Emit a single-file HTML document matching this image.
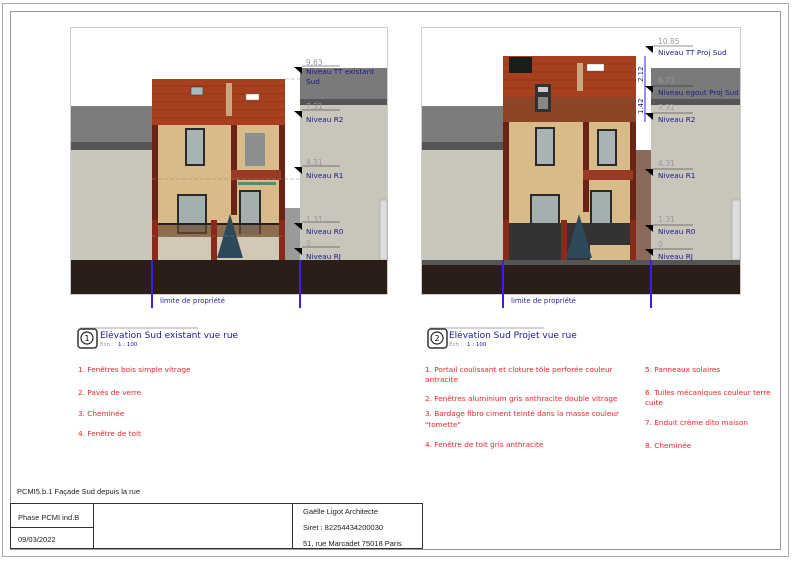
<!DOCTYPE html>
<html><head><meta charset="utf-8"><style>
html,body{margin:0;padding:0;background:#fff;width:792px;height:561px;overflow:hidden}
svg{display:block}
text{font-family:"DejaVu Sans","Liberation Sans",sans-serif}
.lv{fill:#1a1a8c;font-size:7.3px}
.nm{fill:#999;font-size:7.5px}
.rd{fill:#e8262a;font-size:7.3px}
.tb{font-family:"Liberation Sans",sans-serif;font-size:7.5px;fill:#222}
</style></head><body>
<svg width="792" height="561" viewBox="0 0 792 561" xmlns="http://www.w3.org/2000/svg">
<rect x="2.5" y="3.5" width="786" height="553" fill="none" stroke="#aaa" stroke-width="1"/>
<rect x="10.5" y="11.5" width="770" height="538" fill="none" stroke="#999" stroke-width="1"/>

<!-- LEFT DRAWING -->
<rect x="70.5" y="27.5" width="317" height="267" fill="#fff" stroke="#ccc"/>
<rect x="71" y="106" width="81" height="40" fill="#7c7c7c"/>
<rect x="71" y="142" width="81" height="8" fill="#555"/>
<rect x="71" y="150" width="81" height="110" fill="#c9c6bc"/>
<rect x="300" y="68" width="87" height="31" fill="#7a7a7a"/>
<rect x="300" y="99" width="87" height="6" fill="#555"/>
<rect x="300" y="105" width="87" height="155" fill="#c8c5bb"/>
<rect x="380" y="200" width="7" height="60" fill="#ddd" stroke="#999" stroke-width=".5"/>
<rect x="285" y="208" width="15" height="52" fill="#9a9a9a"/>
<rect x="152" y="79" width="133" height="46" fill="#a8401f"/>
<g stroke="#7a2a14" stroke-width=".6"><line x1="152" y1="86" x2="285" y2="86"/><line x1="152" y1="94" x2="285" y2="94"/><line x1="152" y1="102" x2="285" y2="102"/><line x1="152" y1="110" x2="285" y2="110"/><line x1="152" y1="118" x2="285" y2="118"/></g>
<rect x="191" y="87" width="12" height="8" fill="#a9b8b8" stroke="#333" stroke-width=".5"/>
<rect x="226" y="83" width="6" height="33" fill="#c9a77c"/>
<rect x="246" y="94" width="13" height="6" fill="#fff" stroke="#577" stroke-width=".4"/>
<rect x="152" y="125" width="133" height="135" fill="#d9bb8a"/>
<rect x="152" y="125" width="6" height="135" fill="#6b2315"/>
<rect x="279" y="125" width="6" height="135" fill="#6b2315"/>
<rect x="231" y="125" width="6" height="90" fill="#6b2315"/>
<rect x="185" y="128" width="20" height="38" fill="#2a2a2a"/><rect x="187" y="130" width="16" height="34" fill="#a8b4b4"/>
<rect x="245" y="133" width="20" height="33" fill="#8a8f90"/>
<rect x="231" y="170" width="50" height="10" fill="#9b3a24"/>
<rect x="238" y="182" width="38" height="3" fill="#4a8f7a"/>
<rect x="177" y="194" width="30" height="40" fill="#2a2a2a"/><rect x="179" y="196" width="26" height="36" fill="#a4b0b0"/>
<rect x="239" y="190" width="22" height="44" fill="#2a2a2a"/><rect x="241" y="192" width="18" height="42" fill="#a4b0b0"/>
<rect x="152" y="223" width="133" height="2" fill="#222"/>
<rect x="152" y="225" width="133" height="12" fill="#6b4a30" opacity=".7"/>
<rect x="152" y="237" width="133" height="23" fill="#d2c8b6"/>
<rect x="152" y="220" width="6" height="40" fill="#8a2a1a"/><rect x="211" y="220" width="6" height="40" fill="#8a2a1a"/><rect x="279" y="220" width="6" height="40" fill="#8a2a1a"/>
<polygon points="230,214 243,258 217,258" fill="#2e4a5a"/>
<rect x="71" y="260" width="316" height="34" fill="#2b1d17"/>
<rect x="151" y="260" width="2" height="48" fill="#3a1fe6"/>
<rect x="299" y="260" width="2" height="48" fill="#3a1fe6"/>
<text x="160" y="303" style="font-size:7px;fill:#2a2aa0">limite de propriété</text>
<g stroke="#888" stroke-width=".6" stroke-dasharray="4,2"><line x1="285" y1="79" x2="300" y2="79"/><line x1="152" y1="179" x2="300" y2="179"/><line x1="152" y1="236" x2="300" y2="236"/></g>
<g fill="#000"><polygon points="294,67 302,67 302,74"/><polygon points="294,111 302,111 302,118"/><polygon points="294,167 302,167 302,174"/><polygon points="294,223 302,223 302,230"/><polygon points="294,248 302,248 302,255"/></g>
<g stroke="#222" stroke-width=".6"><line x1="302" y1="66" x2="340" y2="66"/><line x1="302" y1="110" x2="340" y2="110"/><line x1="302" y1="166" x2="340" y2="166"/><line x1="302" y1="222" x2="340" y2="222"/><line x1="302" y1="247" x2="340" y2="247"/></g>
<text class="nm" x="306" y="65">9,63</text><text class="lv" x="306" y="74">Niveau TT existant</text><text class="lv" x="306" y="84">Sud</text>
<text class="nm" x="306" y="109">7,31</text><text class="lv" x="306" y="122">Niveau R2</text>
<text class="nm" x="306" y="165">4,31</text><text class="lv" x="306" y="178">Niveau R1</text>
<text class="nm" x="306" y="222">1,31</text><text class="lv" x="306" y="234">Niveau R0</text>
<text class="nm" x="306" y="246">0</text><text class="lv" x="306" y="259">Niveau RJ</text>

<!-- RIGHT DRAWING -->
<rect x="421.5" y="27.5" width="319" height="267" fill="#fff" stroke="#ccc"/>
<rect x="422" y="106" width="81" height="40" fill="#7c7c7c"/>
<rect x="422" y="142" width="81" height="8" fill="#555"/>
<rect x="422" y="150" width="81" height="110" fill="#c9c6bc"/>
<rect x="651" y="68" width="89" height="31" fill="#7a7a7a"/>
<rect x="651" y="99" width="89" height="6" fill="#555"/>
<rect x="651" y="105" width="89" height="155" fill="#c8c5bb"/>
<rect x="732" y="200" width="8" height="60" fill="#ddd" stroke="#999" stroke-width=".5"/>
<rect x="636" y="150" width="15" height="110" fill="#8a6a5a"/>
<rect x="503" y="56" width="133" height="41" fill="#a8401f"/>
<g stroke="#7a2a14" stroke-width=".6"><line x1="503" y1="64" x2="636" y2="64"/><line x1="503" y1="72" x2="636" y2="72"/><line x1="503" y1="80" x2="636" y2="80"/><line x1="503" y1="88" x2="636" y2="88"/></g>
<rect x="509" y="57" width="23" height="16" fill="#1c1c1c"/>
<rect x="577" y="63" width="6" height="28" fill="#c9a77c"/>
<rect x="587" y="64" width="17" height="7" fill="#fff" stroke="#577" stroke-width=".4"/>
<rect x="503" y="97" width="133" height="25" fill="#8c4526"/>
<rect x="535" y="84" width="16" height="28" fill="#333"/><rect x="538" y="87" width="10" height="5" fill="#ccc"/><rect x="538" y="97" width="10" height="12" fill="#888"/>
<rect x="503" y="122" width="133" height="138" fill="#d9bb8a"/>
<rect x="503" y="122" width="6" height="138" fill="#6b2315"/>
<rect x="630" y="122" width="6" height="138" fill="#6b2315"/>
<rect x="583" y="122" width="6" height="90" fill="#6b2315"/>
<rect x="535" y="127" width="20" height="39" fill="#2a2a2a"/><rect x="537" y="129" width="16" height="35" fill="#a8b4b4"/>
<rect x="597" y="129" width="20" height="37" fill="#2a2a2a"/><rect x="599" y="131" width="16" height="33" fill="#a8b4b4"/>
<rect x="583" y="170" width="50" height="10" fill="#9b3a24"/>
<rect x="530" y="194" width="30" height="42" fill="#2a2a2a"/><rect x="532" y="196" width="26" height="38" fill="#a4b0b0"/>
<rect x="590" y="190" width="22" height="46" fill="#2a2a2a"/><rect x="592" y="192" width="18" height="44" fill="#a4b0b0"/>
<rect x="503" y="223" width="133" height="37" fill="#333"/>
<rect x="590" y="245" width="46" height="15" fill="#d9bb8a"/>
<rect x="503" y="220" width="6" height="40" fill="#8a2a1a"/><rect x="561" y="220" width="6" height="40" fill="#8a2a1a"/><rect x="630" y="220" width="6" height="40" fill="#8a2a1a"/>
<polygon points="579,214 592,258 566,258" fill="#2e4a5a"/>
<rect x="422" y="260" width="318" height="5" fill="#555"/>
<rect x="422" y="265" width="318" height="29" fill="#2b1d17"/>
<rect x="502" y="260" width="2" height="48" fill="#3a1fe6"/>
<rect x="650" y="260" width="2" height="48" fill="#3a1fe6"/>
<text x="511" y="303" style="font-size:7px;fill:#2a2aa0">limite de propriété</text>
<g stroke="#3a1fe6" stroke-width="1"><line x1="645" y1="56" x2="645" y2="122"/></g>
<text x="0" y="0" transform="translate(643,82) rotate(-90)" style="font-size:7px;fill:#1a1a8c">2.12</text>
<text x="0" y="0" transform="translate(643,114) rotate(-90)" style="font-size:7px;fill:#1a1a8c">1.42</text>
<g fill="#000"><polygon points="645,46 653,46 653,53"/><polygon points="645,86 653,86 653,93"/><polygon points="645,113 653,113 653,120"/><polygon points="645,169 653,169 653,176"/><polygon points="645,225 653,225 653,232"/><polygon points="645,249 653,249 653,256"/></g>
<g stroke="#222" stroke-width=".6"><line x1="653" y1="46" x2="693" y2="46"/><line x1="653" y1="86" x2="693" y2="86"/><line x1="653" y1="113" x2="693" y2="113"/><line x1="653" y1="169" x2="693" y2="169"/><line x1="653" y1="225" x2="693" y2="225"/><line x1="653" y1="249" x2="693" y2="249"/></g>
<text class="nm" x="658" y="44">10.85</text><text class="lv" x="658" y="55">Niveau TT Proj Sud</text>
<text class="nm" x="658" y="83">8.73</text><text class="lv" x="658" y="95">Niveau egout Proj Sud</text>
<text class="nm" x="658" y="110">7.31</text><text class="lv" x="658" y="122">Niveau R2</text>
<text class="nm" x="658" y="166">4.31</text><text class="lv" x="658" y="178">Niveau R1</text>
<text class="nm" x="658" y="222">1.31</text><text class="lv" x="658" y="234">Niveau R0</text>
<text class="nm" x="658" y="247">0</text><text class="lv" x="658" y="259">Niveau RJ</text>

<!-- CAPTIONS -->
<line x1="80" y1="328" x2="198" y2="328" stroke="#888" stroke-width=".8"/>
<rect x="78" y="329" width="19" height="19" rx="3" fill="#fff" stroke="#333" stroke-width="1.5"/>
<circle cx="87" cy="338" r="6" fill="#fff" stroke="#222" stroke-width="1.2"/>
<text x="87" y="341" text-anchor="middle" style="font-size:8px;fill:#000">1</text>
<text x="100" y="338" style="font-size:9px;fill:#1a1a8c">Elévation Sud existant vue rue</text>
<text x="100" y="346" style="font-size:5.5px;fill:#999">Ech :</text><text x="118" y="346" style="font-size:5.5px;fill:#1a1a8c">1 : 100</text>

<line x1="430" y1="328" x2="544" y2="328" stroke="#888" stroke-width=".8"/>
<rect x="428" y="329" width="19" height="19" rx="3" fill="#fff" stroke="#333" stroke-width="1.5"/>
<circle cx="437" cy="338" r="6" fill="#fff" stroke="#222" stroke-width="1.2"/>
<text x="437" y="341" text-anchor="middle" style="font-size:8px;fill:#000">2</text>
<text x="449" y="338" style="font-size:9px;fill:#1a1a8c">Elévation Sud Projet vue rue</text>
<text x="449" y="346" style="font-size:5.5px;fill:#999">Ech :</text><text x="467" y="346" style="font-size:5.5px;fill:#1a1a8c">1 : 100</text>

<text class="rd" x="78" y="372">1. Fenêtres bois simple vitrage</text>
<text class="rd" x="78" y="395">2. Pavés de verre</text>
<text class="rd" x="78" y="416">3. Cheminée</text>
<text class="rd" x="78" y="436">4. Fenêtre de toit</text>

<text class="rd" x="425" y="372">1. Portail coulissant et cloture tôle perforée couleur</text>
<text class="rd" x="425" y="382">antracite</text>
<text class="rd" x="425" y="401">2. Fenêtres aluminium gris anthracite double vitrage</text>
<text class="rd" x="425" y="416">3. Bardage fibro ciment teinté dans la masse couleur</text>
<text class="rd" x="425" y="427">"tomette"</text>
<text class="rd" x="425" y="447">4. Fenêtre de toit gris anthracite</text>
<text class="rd" x="645" y="372">5. Panneaux solaires</text>
<text class="rd" x="645" y="395">6. Tuiles mécaniques couleur terre</text>
<text class="rd" x="645" y="405">cuite</text>
<text class="rd" x="645" y="425">7. Enduit crème dito maison</text>
<text class="rd" x="645" y="448">8. Cheminée</text>

<!-- TITLE BLOCK -->
<text class="tb" x="17" y="494">PCMI5.b.1 Façade Sud depuis la rue</text>
<g stroke="#333" stroke-width="1" fill="none">
<rect x="10.5" y="503.5" width="412" height="45"/>
<line x1="93.5" y1="503" x2="93.5" y2="549"/>
<line x1="292.5" y1="503" x2="292.5" y2="549"/>
<line x1="10" y1="527.5" x2="93" y2="527.5"/>
</g>
<text class="tb" x="18" y="520">Phase PCMI ind.B</text>
<text class="tb" x="18" y="542">09/03/2022</text>
<text class="tb" x="303" y="514">Gaëlle Ligot Architecte</text>
<text class="tb" x="303" y="530">Siret :  82254434200030</text>
<text class="tb" x="303" y="546">51, rue Marcadet 75018 Paris</text>
</svg>
</body></html>
